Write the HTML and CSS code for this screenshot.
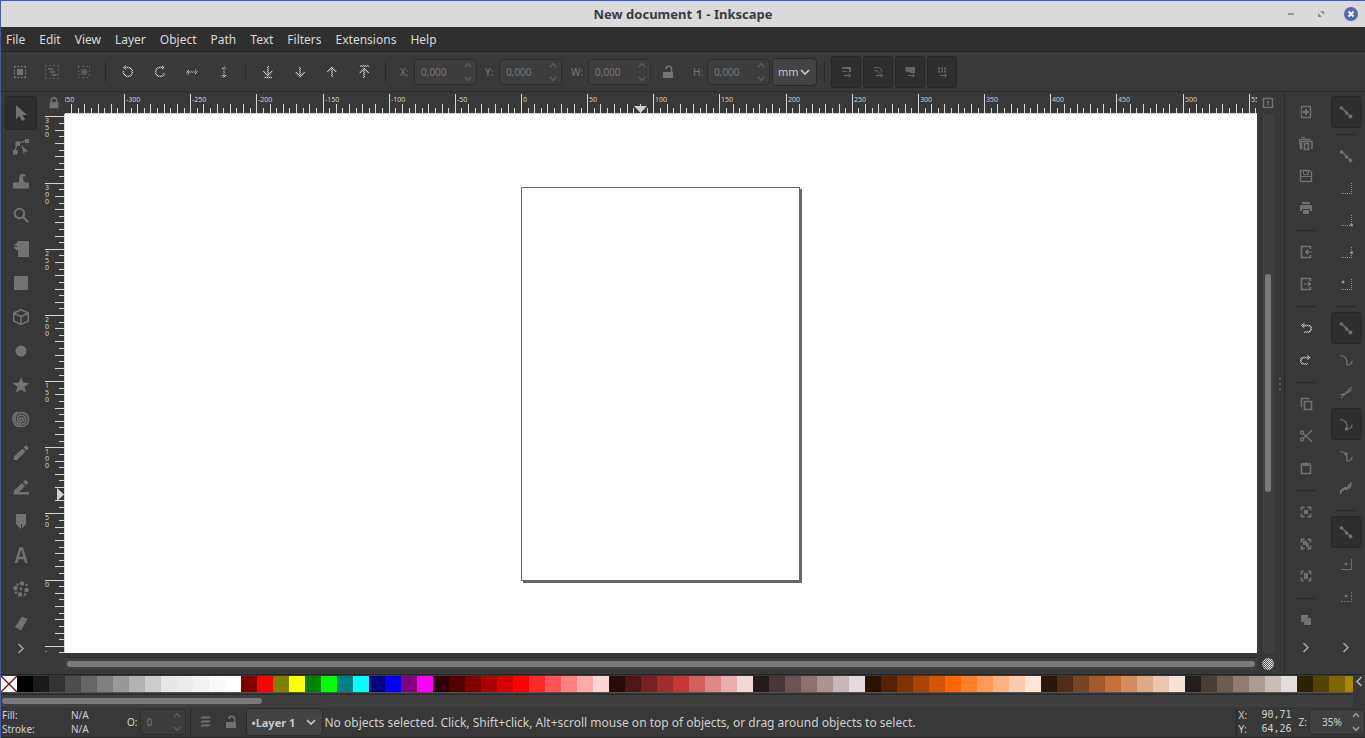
FILE: index.html
```
<!DOCTYPE html>
<html lang="en">
<head>
<meta charset="utf-8">
<title>New document 1 - Inkscape</title>
<link rel="stylesheet" href="styles.css">
</head>
<body>
<svg class="defs" width="0" height="0" aria-hidden="true">
  <defs>
    <pattern id="chk" width="2" height="2" patternUnits="userSpaceOnUse"><path d="M0 0h2v2H0z" fill="#606060"/><path d="M0 0h1v1H0zM1 1h1v1H1z" fill="#d0d0d0"/></pattern>
    <symbol id="i-selall" viewBox="0 0 16 16"><path d="M5 5h6v6H5z" fill="currentColor"/><path d="M2 2.500h12M2 13.500h12M2.500 2v12M13.500 2v12" stroke="currentColor" stroke-dasharray="2 1.300"/></symbol>
    <symbol id="i-sellayers" viewBox="0 0 16 16"><path d="M4 4h5v2H4zM6 7h5v2H6zM8 10h5v2H8z" fill="currentColor"/><path d="M1 1.500h14M1 14.500h14M1.500 1v14M14.500 1v14" stroke="currentColor" stroke-dasharray="2 2"/></symbol>
    <symbol id="i-desel" viewBox="0 0 16 16"><path d="M5 5h1v1H5zM7 5h2v1H7zM10 5h1v1h-1zM6 6h4v4H6zM5 7h1v2H5zM10 7h1v2h-1zM5 10h1v1H5zM7 10h2v1H7zM10 10h1v1h-1z" fill="currentColor"/><path d="M2 2.500h12M2 13.500h12M2.500 2v12M13.500 2v12" stroke="currentColor" stroke-dasharray="2 2"/></symbol>
    <symbol id="i-ccw" viewBox="0 0 16 16"><path d="M3.500 7a4.500 4.500 0 1 0 4-3.500H4" stroke="url(#chk)" stroke-width="1.600"/><path d="M6 1 3 3.500 6 6z" fill="url(#chk)"/></symbol>
    <symbol id="i-cw" viewBox="0 0 16 16"><path d="M12.500 9A4.500 4.500 0 1 1 9 3.500h3" stroke="url(#chk)" stroke-width="1.600"/><path d="M10 1l3 2.500L10 6z" fill="url(#chk)"/></symbol>
    <symbol id="i-fliph" viewBox="0 0 16 16"><path d="M3 7.500h10v1H3zM5 5v6L2 8zM11 5v6l3-3z" fill="url(#chk)"/></symbol>
    <symbol id="i-flipv" viewBox="0 0 16 16"><path d="M7.500 3h1v10h-1zM5 5h6L8 2zM5 11h6l-3 3z" fill="url(#chk)"/></symbol>
    <symbol id="i-down" viewBox="0 0 16 16"><path d="M8 3v9M3.500 8 8 12.500 12.500 8" stroke="url(#chk)" stroke-width="1.600"/></symbol>
    <symbol id="i-up" viewBox="0 0 16 16"><path d="M8 13V4M3.500 8 8 3.500 12.500 8" stroke="url(#chk)" stroke-width="1.600"/></symbol>
    <symbol id="i-bottom" viewBox="0 0 16 16"><path d="M8 2v9M3.500 7 8 11.500 12.500 7M4 13.500h8" stroke="url(#chk)" stroke-width="1.600"/></symbol>
    <symbol id="i-top" viewBox="0 0 16 16"><path d="M8 14V5M3.500 9 8 4.500 12.500 9M4 2h9" stroke="url(#chk)" stroke-width="1.600"/></symbol>
    <symbol id="i-lock" viewBox="0 0 16 16"><path d="M3 7h10v7H3z" fill="currentColor"/><path d="M5 7V5a3 3 0 0 1 6 0v2" stroke="currentColor" stroke-width="1.600"/></symbol>
    <symbol id="i-unlock" viewBox="0 0 16 16"><path d="M3 8h10v6H3z" fill="currentColor"/><path d="M6 5a2.700 2.700 0 0 1 5.500 0v3" stroke="currentColor" stroke-width="1.600"/></symbol>
    <symbol id="i-layers" viewBox="0 0 16 16"><path d="M5 2.500h9l-2 2H3zM5 6.500h9l-2 2H3zM5 10.500h9l-2 2H3z" fill="currentColor"/></symbol>
    <symbol id="i-scstroke" viewBox="0 0 16 16"><path d="M4 4h8v4" stroke="currentColor" stroke-width="2"/><path d="M4 7.500h5M6 11.500h6M10.500 9.500l2 2-2 2" stroke="currentColor"/></symbol>
    <symbol id="i-sccorner" viewBox="0 0 16 16"><path d="M4 3.500h3a5 5 0 0 1 5 5M4 6.500h2a3 3 0 0 1 3 3M6 11.500h6M10.500 9.500l2 2-2 2" stroke="currentColor"/></symbol>
    <symbol id="i-scgrad" viewBox="0 0 16 16"><path d="M3 3h10v6H8V8H4z" fill="currentColor"/><path d="M6 11.500h6M10.500 9.500l2 2-2 2" stroke="currentColor"/></symbol>
    <symbol id="i-scpat" viewBox="0 0 16 16"><path d="M4 4.500h9M4 7.500h9" stroke="currentColor" stroke-width="2" stroke-dasharray="2 1"/><path d="M6 11.500h6M10.500 9.500l2 2-2 2" stroke="currentColor"/></symbol>
    <symbol id="t-select" viewBox="0 0 16 16"><path d="M3 0v14l3.500-3 2.500 5 3-1.500L9.500 10H14z" fill="currentColor"/></symbol>
    <symbol id="t-node" viewBox="0 0 16 16"><path d="M0 11h4.500v4.500H0zM2.500 2.500H7V7H2.500zM12 0h4.500v4H12z" fill="currentColor"/><path d="M2 12 4 5l9-3.500" stroke="currentColor" stroke-width="1.200"/><path d="m8 6 7.500 6.500-4 .2-.5 3z" fill="currentColor"/></symbol>
    <symbol id="t-tweak" viewBox="0 0 16 16"><path d="M0 9.500h5C7 8 5.500 5 6.500 3c1.500-3.500 6-3 6.500 1-2-1.500-3.500-.5-3 1.500.2 2 1.500 3.500 3 4h3v6H0z" fill="currentColor"/></symbol>
    <symbol id="t-zoom" viewBox="0 0 16 16"><circle cx="6.500" cy="6.500" r="4.700" stroke="currentColor" stroke-width="2"/><path d="m10 10 5 5" stroke="currentColor" stroke-width="2.400"/></symbol>
    <symbol id="t-measure" viewBox="0 0 16 16"><path d="M5 0h11v16H5v-6L1 7V6h3V5H1z" fill="currentColor"/></symbol>
    <symbol id="t-rect" viewBox="0 0 16 16"><path d="M1 1h14v14H1z" fill="currentColor"/></symbol>
    <symbol id="t-box" viewBox="0 0 16 16"><path d="M8 .8 15.300 4v8L8 15.500.7 12V4zM.7 4 8 7.500 15.300 4M8 7.500v8" stroke="currentColor" stroke-width="1.600"/></symbol>
    <symbol id="t-circle" viewBox="0 0 16 16"><circle cx="8" cy="8" r="5.500" fill="currentColor"/></symbol>
    <symbol id="t-star" viewBox="0 0 16 16"><path d="m8 0 2.200 5.600 6 .4-4.600 3.800 1.500 5.900L8 12.500l-5.100 3.200 1.500-5.900L-.2 6l6-.4z" fill="currentColor"/></symbol>
    <symbol id="t-spiral" viewBox="0 0 18 18"><path d="M9 9.500c-1.500 0-1.500-2 0-2 2.500 0 3 4 0 4.200-4.500.3-4.500-6.500 0-6.700 6-.2 6.500 9 0 9.200-8 .3-8-11.600 0-11.700 10-.2 10 14 0 14C1 16.500 0 9 2 4.500L5 2" stroke="currentColor" stroke-width="1.700"/></symbol>
    <symbol id="t-pencil" viewBox="0 0 16 16"><path d="m.5 15 .5-3.500L9.500 3.500 12.500 6.500 4 15zM10.500 2.500 13 0l3 3-2.500 2.500z" fill="currentColor"/></symbol>
    <symbol id="t-pen" viewBox="0 0 16 16"><path d="m.5 15.500.5-4L9 4l3 3-6 6h10v2.500zM10 3l2.500-2.500 3 3L13 6z" fill="currentColor"/></symbol>
    <symbol id="t-callig" viewBox="0 0 16 16"><path d="M3 1h10v10l-4 4.500V11H8v4.500H7L3 11z" fill="currentColor"/></symbol>
    <symbol id="t-text" viewBox="0 0 16 16"><path d="M3 16 7.300 1.500h1.800l4.300 14.500M4.500 11h7.500" stroke="currentColor" stroke-width="2.600"/></symbol>
    <symbol id="t-spray" viewBox="0 0 16 16"><g fill="currentColor"><circle cx="9" cy="2.500" r="2.200"/><circle cx="2.500" cy="7" r="2.200"/><circle cx="13.500" cy="9" r="2.300"/><circle cx="7" cy="13.500" r="2.200"/><circle cx="8" cy="8" r="1.400"/><circle cx="4.500" cy="3.500" r="1.200"/><circle cx="13.500" cy="4" r="1.200"/><circle cx="3" cy="11.500" r="1.300"/><circle cx="12" cy="13.500" r="1.300"/></g></symbol>
    <symbol id="t-eraser" viewBox="0 0 16 16"><path d="M9 1.500 14.500 4 8 15.500 2 12z" fill="currentColor"/></symbol>
    <symbol id="c-right" viewBox="0 0 16 16"><path d="m5.500 4 4.500 4.500-4.500 4.500" stroke="currentColor" stroke-width="1.700"/></symbol>
    <symbol id="c-left" viewBox="0 0 16 16"><path d="M10.500 4 6 8.500l4.500 4.500" stroke="currentColor" stroke-width="1.700"/></symbol>
    <symbol id="c-down" viewBox="0 0 10 10"><path d="m1 3 4 4 4-4" stroke="currentColor" stroke-width="1.700"/></symbol>
    <symbol id="c-spin" viewBox="0 0 8 24"><path d="m1 7 3-3.500L7 7M1 17l3 3.500L7 17" stroke="currentColor" stroke-width="1.400"/></symbol>
    <symbol id="d-new" viewBox="0 0 16 16"><path d="M3.500 2.500h9v11h-9z" stroke="currentColor" stroke-width="1.400"/><path d="M8 5v6M5 8h6" stroke="currentColor" stroke-width="2"/></symbol>
    <symbol id="d-open" viewBox="0 0 16 16"><path d="M4.500 12.500H2.500L1.500 3.500h11" stroke="currentColor" stroke-width="1.500"/><path d="M3 1.500h4" stroke="currentColor"/><path d="M3.500 12V5.500H14V12h-1.500" stroke="currentColor" stroke-width="1.500"/><path d="M6.500 7.500h4v6h-4z" stroke="currentColor" stroke-width="1.600"/></symbol>
    <symbol id="d-save" viewBox="0 0 16 16"><path d="M2.500 2.500h9l2 2v9h-11z" stroke="currentColor" stroke-width="1.400"/><path d="M3 8.500h10M5.500 3v3.500h5V3M9 3v2" stroke="currentColor"/></symbol>
    <symbol id="d-print" viewBox="0 0 16 16"><path d="M4 2h8v2H4zM2 5h12v6h-2V9H4v2H2zM5 10h6v4H5z" fill="currentColor"/></symbol>
    <symbol id="d-import" viewBox="0 0 16 16"><path d="M12.500 5V2.500h-9v11h9V11" stroke="currentColor" stroke-width="1.700"/><path d="M14 8H8M10 5.500 7 8l3 2.500z" stroke="currentColor" fill="currentColor"/></symbol>
    <symbol id="d-export" viewBox="0 0 16 16"><path d="M12.500 5V2.500h-9v11h9V11" stroke="currentColor" stroke-width="1.700"/><path d="M6 8h5M10.500 6l2.500 2-2.500 2z" stroke="currentColor" fill="currentColor"/></symbol>
    <symbol id="d-undo" viewBox="0 0 16 16"><path d="M4 5.500h6a3.200 3.200 0 0 1 0 6.500H6" stroke="url(#chk)" stroke-width="1.600"/><path d="M6.500 2.500v6L3 5.500z" fill="url(#chk)"/></symbol>
    <symbol id="d-redo" viewBox="0 0 16 16"><path d="M12 5.500H6A3.200 3.200 0 0 0 6 12h4" stroke="url(#chk)" stroke-width="1.600"/><path d="M9.500 2.500v6l3.500-3z" fill="url(#chk)"/></symbol>
    <symbol id="d-copy" viewBox="0 0 16 16"><path d="M4 10.500H3.500v-8h7v1" stroke="currentColor" stroke-width="1.500"/><path d="M6.500 5.500h7v8h-7z" stroke="currentColor" stroke-width="1.700"/></symbol>
    <symbol id="d-cut" viewBox="0 0 16 16"><path d="m5 5.500 9 8M5 10.500l9-8" stroke="currentColor" stroke-width="1.600"/><circle cx="4" cy="4.500" r="1.500" stroke="currentColor" stroke-width="1.300"/><circle cx="4" cy="11.500" r="1.500" stroke="currentColor" stroke-width="1.300"/></symbol>
    <symbol id="d-paste" viewBox="0 0 16 16"><path d="M3.500 4h9v9.500h-9z" stroke="currentColor" stroke-width="1.600"/><path d="M5 3h2l1-1.500L9 3h2v3H5z" fill="currentColor"/></symbol>
    <symbol id="d-zsel" viewBox="0 0 16 16"><path d="M3.500 6.500v-3h3M9.500 3.500h3v3M12.500 9.500v3h-3M6.500 12.500h-3v-3" stroke="currentColor" stroke-width="1.800"/><path d="M6 6h4v4H6z" fill="currentColor"/></symbol>
    <symbol id="d-zdraw" viewBox="0 0 16 16"><path d="M3.500 6.500v-3h3M9.500 3.500h3v3M12.500 9.500v3h-3M6.500 12.500h-3v-3" stroke="currentColor" stroke-width="1.800"/><path d="M5 5h4v2h2v4H8V9H5z" fill="currentColor"/></symbol>
    <symbol id="d-zpage" viewBox="0 0 16 16"><path d="M3.500 6.500v-3h2M10.500 3.500h2v3M12.500 9.500v3h-2M5.500 12.500h-2v-3" stroke="currentColor" stroke-width="1.800"/><path d="M6 5h4v6H6z" fill="currentColor"/></symbol>
    <symbol id="d-dup" viewBox="0 0 16 16"><path d="M3 3h7v3h3v7H6v-3H3z" fill="currentColor"/></symbol>
    <symbol id="s-snap" viewBox="0 0 16 16"><path d="m4 4 8.500 8.500" stroke="currentColor" stroke-width="1.300"/><circle cx="3.500" cy="4" r="1.800" fill="currentColor"/><circle cx="8.500" cy="9" r="1.700" fill="currentColor"/><circle cx="12.500" cy="12.500" r="1.900" fill="currentColor"/></symbol>
    <symbol id="s-corner" viewBox="0 0 16 16"><path d="M3 13.500h11M13.500 3v10" stroke="#909090" stroke-dasharray="1 1"/></symbol>
    <symbol id="s-corner2" viewBox="0 0 16 16"><path d="M3 13.500h11M13.500 3v10" stroke="#909090" stroke-dasharray="1 1"/><circle cx="13.500" cy="13" r="1.500" fill="#909090"/></symbol>
    <symbol id="s-edgemid" viewBox="0 0 16 16"><path d="M3 13.500h11M13.500 3v10" stroke="#909090" stroke-dasharray="1 1"/><circle cx="13.500" cy="8.500" r="1.500" fill="#909090"/></symbol>
    <symbol id="s-center" viewBox="0 0 16 16"><path d="M3 13.500h11M13.500 3v10" stroke="#909090" stroke-dasharray="1 1"/><circle cx="5" cy="6" r="1.500" fill="#909090"/></symbol>
    <symbol id="s-path" viewBox="0 0 16 16"><path d="M2 3.500c5 0 8 4 7 9.500 3 0 5-1.500 5-4.500" stroke="currentColor" stroke-width="1.200"/></symbol>
    <symbol id="s-inter" viewBox="0 0 16 16"><path d="M2 10.500c5 0 8-2.500 12-4.500M3 14 13.500 3" stroke="currentColor" stroke-width="1.200"/></symbol>
    <symbol id="s-cusp" viewBox="0 0 16 16"><path d="M2 3.500c5 0 8 4 7 9.500 3 0 5-1.500 5-4.500" stroke="currentColor" stroke-width="1.200"/><circle cx="8.500" cy="13" r="1.800" fill="currentColor"/></symbol>
    <symbol id="s-smooth" viewBox="0 0 16 16"><path d="M2 3.500c5 0 8 4 7 9.500 3 0 5-1.500 5-4.500" stroke="currentColor" stroke-width="1.200"/><circle cx="8" cy="6" r="1.800" fill="currentColor"/></symbol>
    <symbol id="s-mid" viewBox="0 0 16 16"><path d="M2 12c3-5 8-3 12-7M2.500 14l2-6M11.500 9l1.500-7M5 11l2-4M9 10l2-6" stroke="currentColor" stroke-width="1.400"/><circle cx="8" cy="8.500" r="1.700" fill="currentColor"/></symbol>
    <symbol id="s-obj" viewBox="0 0 16 16"><path d="M3 13.500h10.500V3" stroke="currentColor"/><circle cx="8" cy="8" r="1.500" fill="currentColor"/></symbol>
    <symbol id="s-rot" viewBox="0 0 16 16"><path d="M3 13.500h10.500V3" stroke="currentColor" stroke-dasharray="2 1"/><circle cx="8" cy="8" r="1.500" fill="currentColor"/></symbol>
  </defs>
</svg>

<div class="app">
  <header class="titlebar">
    <h1 class="title">New document 1 - Inkscape</h1>
    <div class="winbtns">
      <button class="winbtn" aria-label="Minimize"><svg width="16" height="16" viewBox="0 0 16 16"><path d="M5 8h6" stroke="#999" stroke-width="2"/></svg></button>
      <button class="winbtn" aria-label="Maximize"><svg width="16" height="16" viewBox="0 0 16 16"><path d="M7 5h4v4zM5 7l4 4H5z" fill="#8e8e8e"/></svg></button>
      <button class="winbtn" aria-label="Close"><svg width="16" height="16" viewBox="0 0 16 16"><circle cx="8" cy="8" r="7" fill="#5468b8"/><path d="m5.500 5.500 5 5M10.500 5.500l-5 5" stroke="#fff" stroke-width="2"/></svg></button>
    </div>
  </header>

  <nav class="menubar">
    <button>File</button><button>Edit</button><button>View</button><button>Layer</button><button>Object</button><button>Path</button><button>Text</button><button>Filters</button><button>Extensions</button><button>Help</button>
  </nav>

  <div class="toolbar">
    <button class="tb mid" aria-label="Select all"><svg><use href="#i-selall"/></svg></button>
    <button class="tb dim" aria-label="Select all in all layers"><svg><use href="#i-sellayers"/></svg></button>
    <button class="tb dim" aria-label="Deselect"><svg><use href="#i-desel"/></svg></button>
    <span class="vsep"></span>
    <button class="tb" aria-label="Rotate left"><svg><use href="#i-ccw"/></svg></button>
    <button class="tb" aria-label="Rotate right"><svg><use href="#i-cw"/></svg></button>
    <button class="tb" aria-label="Flip horizontal"><svg><use href="#i-fliph"/></svg></button>
    <button class="tb" aria-label="Flip vertical"><svg><use href="#i-flipv"/></svg></button>
    <span class="vsep"></span>
    <button class="tb" aria-label="Lower to bottom"><svg><use href="#i-bottom"/></svg></button>
    <button class="tb" aria-label="Lower"><svg><use href="#i-down"/></svg></button>
    <button class="tb" aria-label="Raise"><svg><use href="#i-up"/></svg></button>
    <button class="tb" aria-label="Raise to top"><svg><use href="#i-top"/></svg></button>
    <span class="vsep"></span>
    <div class="field"><label for="fx">X:</label><span class="spin"><input id="fx" value="0,000" disabled><svg><use href="#c-spin"/></svg></span></div>
    <div class="field"><label for="fy">Y:</label><span class="spin"><input id="fy" value="0,000" disabled><svg><use href="#c-spin"/></svg></span></div>
    <div class="field wide"><label for="fw">W:</label><span class="spin"><input id="fw" value="0,000" disabled><svg><use href="#c-spin"/></svg></span></div>
    <button class="tb mid lockbtn" aria-label="Lock ratio"><svg><use href="#i-unlock"/></svg></button>
    <div class="field"><label for="fh">H:</label><span class="spin"><input id="fh" value="0,000" disabled><svg><use href="#c-spin"/></svg></span></div>
    <span class="drop unit"><select aria-label="Unit"><option>mm</option></select><svg><use href="#c-down"/></svg></span>
    <span class="vsep"></span>
    <button class="tb on" aria-label="Scale stroke width"><svg><use href="#i-scstroke"/></svg></button>
    <button class="tb on" aria-label="Scale corners"><svg><use href="#i-sccorner"/></svg></button>
    <button class="tb on" aria-label="Move gradients"><svg><use href="#i-scgrad"/></svg></button>
    <button class="tb on" aria-label="Move patterns"><svg><use href="#i-scpat"/></svg></button>
  </div>

  <main class="main">
    <div class="toolbox">
      <button class="tool on" aria-label="Selector"><svg><use href="#t-select"/></svg></button>
      <button class="tool" aria-label="Node"><svg><use href="#t-node"/></svg></button>
      <button class="tool" aria-label="Tweak"><svg><use href="#t-tweak"/></svg></button>
      <button class="tool" aria-label="Zoom"><svg><use href="#t-zoom"/></svg></button>
      <button class="tool" aria-label="Measure"><svg><use href="#t-measure"/></svg></button>
      <button class="tool" aria-label="Rectangle"><svg><use href="#t-rect"/></svg></button>
      <button class="tool" aria-label="3D box"><svg><use href="#t-box"/></svg></button>
      <button class="tool" aria-label="Ellipse"><svg><use href="#t-circle"/></svg></button>
      <button class="tool" aria-label="Star"><svg><use href="#t-star"/></svg></button>
      <button class="tool spiral" aria-label="Spiral"><svg><use href="#t-spiral"/></svg></button>
      <button class="tool" aria-label="Pencil"><svg><use href="#t-pencil"/></svg></button>
      <button class="tool" aria-label="Pen"><svg><use href="#t-pen"/></svg></button>
      <button class="tool" aria-label="Calligraphy"><svg><use href="#t-callig"/></svg></button>
      <button class="tool" aria-label="Text"><svg><use href="#t-text"/></svg></button>
      <button class="tool" aria-label="Spray"><svg><use href="#t-spray"/></svg></button>
      <button class="tool" aria-label="Eraser"><svg><use href="#t-eraser"/></svg></button>
      <button class="more" aria-label="More tools"><svg><use href="#c-right"/></svg></button>
    </div>

    <div class="desk">
      <button class="guidelock" aria-label="Lock guides"><svg><use href="#i-lock"/></svg></button>
      <svg class="hruler" id="hruler"></svg>
      <button class="pagebtn" aria-label="Fit page"><svg width="12" height="12" viewBox="0 0 12 12"><path d="M1.500 1.500h9v9h-9z" stroke="#707070" stroke-width="1.400"/><path d="M6 4v4M5 4.500h1" stroke="#888"/></svg></button>
      <svg class="vruler" id="vruler"></svg>
      <div class="canvas" id="canvas"><div class="page"></div></div>
      <div class="vscroll"><div class="vtrough"><div class="vthumb"></div></div><div class="grip"><i></i><i></i><i></i></div></div>
      <div class="hscroll"><div class="hthumb"></div></div>
      <button class="cms" aria-label="Color management"><svg width="12" height="12" viewBox="0 0 12 12"><defs><pattern id="dots" width="2" height="2" patternUnits="userSpaceOnUse"><path d="M0 0h1v1H0zM1 1h1v1H1z" fill="#e0e0e0"/></pattern></defs><path d="M6 6V0a6 6 0 0 1 6 6z" fill="#466"/><path d="M6 6h6a6 6 0 0 1-6 6z" fill="#6a6420"/><path d="M6 6v6a6 6 0 0 1-6-6z" fill="#80283c"/><path d="M6 6H0a6 6 0 0 1 6-6z" fill="#533b60"/><circle cx="6" cy="6" r="6" fill="url(#dots)"/></svg></button>
    </div>

    <div class="commands">
      <button class="cmd" aria-label="New"><svg><use href="#d-new"/></svg></button>
      <button class="cmd" aria-label="Open"><svg><use href="#d-open"/></svg></button>
      <button class="cmd" aria-label="Save"><svg><use href="#d-save"/></svg></button>
      <button class="cmd" aria-label="Print"><svg><use href="#d-print"/></svg></button>
      <span class="hsep"></span>
      <button class="cmd" aria-label="Import"><svg><use href="#d-import"/></svg></button>
      <button class="cmd" aria-label="Export"><svg><use href="#d-export"/></svg></button>
      <span class="hsep"></span>
      <button class="cmd" aria-label="Undo"><svg><use href="#d-undo"/></svg></button>
      <button class="cmd" aria-label="Redo"><svg><use href="#d-redo"/></svg></button>
      <span class="hsep"></span>
      <button class="cmd" aria-label="Copy"><svg><use href="#d-copy"/></svg></button>
      <button class="cmd" aria-label="Cut"><svg><use href="#d-cut"/></svg></button>
      <button class="cmd" aria-label="Paste"><svg><use href="#d-paste"/></svg></button>
      <span class="hsep"></span>
      <button class="cmd" aria-label="Zoom selection"><svg><use href="#d-zsel"/></svg></button>
      <button class="cmd" aria-label="Zoom drawing"><svg><use href="#d-zdraw"/></svg></button>
      <button class="cmd" aria-label="Zoom page"><svg><use href="#d-zpage"/></svg></button>
      <span class="hsep"></span>
      <button class="cmd" aria-label="Duplicate"><svg><use href="#d-dup"/></svg></button>
      <button class="more" aria-label="More commands"><svg><use href="#c-right"/></svg></button>
    </div>

    <div class="snapbar">
      <button class="cmd on" aria-label="Enable snapping"><svg><use href="#s-snap"/></svg></button>
      <span class="hsep"></span>
      <button class="cmd" aria-label="Snap bounding boxes"><svg><use href="#s-snap"/></svg></button>
      <button class="cmd" aria-label="Snap edges"><svg><use href="#s-corner"/></svg></button>
      <button class="cmd" aria-label="Snap corners"><svg><use href="#s-corner2"/></svg></button>
      <button class="cmd" aria-label="Snap edge midpoints"><svg><use href="#s-edgemid"/></svg></button>
      <button class="cmd" aria-label="Snap box centers"><svg><use href="#s-center"/></svg></button>
      <span class="hsep"></span>
      <button class="cmd on" aria-label="Snap nodes"><svg><use href="#s-snap"/></svg></button>
      <button class="cmd" aria-label="Snap paths"><svg><use href="#s-path"/></svg></button>
      <button class="cmd" aria-label="Snap intersections"><svg><use href="#s-inter"/></svg></button>
      <button class="cmd on" aria-label="Snap cusp nodes"><svg><use href="#s-cusp"/></svg></button>
      <button class="cmd" aria-label="Snap smooth nodes"><svg><use href="#s-smooth"/></svg></button>
      <button class="cmd" aria-label="Snap midpoints"><svg><use href="#s-mid"/></svg></button>
      <span class="hsep"></span>
      <button class="cmd on" aria-label="Snap other points"><svg><use href="#s-snap"/></svg></button>
      <button class="cmd" aria-label="Snap object centers"><svg><use href="#s-obj"/></svg></button>
      <button class="cmd" aria-label="Snap rotation centers"><svg><use href="#s-rot"/></svg></button>
      <button class="more" aria-label="More snapping"><svg><use href="#c-right"/></svg></button>
    </div>
  </main>

  <div class="palette">
    <div class="palmain">
      <div class="swatches" id="swatches"></div>
      <div class="palscroll"><div class="palthumb"></div></div>
    </div>
    <button class="palmenu" aria-label="Palettes"><svg><use href="#c-left"/></svg></button>
  </div>

  <footer class="status">
    <dl class="style"><dt>Fill:</dt><dd>N/A</dd><dt>Stroke:</dt><dd>N/A</dd></dl>
    <div class="opacity"><label for="op">O:</label><span class="spin small"><input id="op" value="0" disabled><svg><use href="#c-spin"/></svg></span></div>
    <span class="bar"></span>
    <button class="sb" aria-label="Layer visibility"><svg><use href="#i-layers"/></svg></button>
    <button class="sb" aria-label="Layer lock"><svg><use href="#i-unlock"/></svg></button>
    <span class="drop layer"><select aria-label="Layer"><option>•Layer 1</option></select><svg><use href="#c-down"/></svg></span>
    <p class="message">No objects selected. Click, Shift+click, Alt+scroll mouse on top of objects, or drag around objects to select.</p>
    <span class="bar"></span>
    <dl class="coords"><dt>X:</dt><dd>90,71</dd><dt>Y:</dt><dd>64,26</dd></dl>
    <label class="zlabel" for="zoom">Z:</label>
    <span class="spin zoom"><input id="zoom" value="35%"><svg><use href="#c-spin"/></svg></span>
  </footer>
</div>
<script src="app.js"></script>
</body>
</html>
```

FILE: styles.css
```
* { box-sizing: border-box; }
body { margin: 0; font-family: "Noto Sans", sans-serif; color: #d0d0d0; background: #383838; overflow: hidden; }
svg { display: block; fill: none; }
.defs { position: absolute; }
button { margin: 0; padding: 0; border: 0; background: none; font: inherit; color: inherit; }
button svg { width: 16px; height: 16px; }
h1, p, dl, dd { margin: 0; }

.app { display: flex; flex-direction: column; height: 100vh; border: 1px solid #4759a0; border-width: 1px 0 0 1px; }

.titlebar { display: grid; grid-template-columns: 1fr auto 1fr; align-items: center; height: 26px; background: #dadada; }
.title { grid-column: 2; font-size: 13px; line-height: 26px; color: #3c3c3c; }
.winbtns { display: flex; justify-content: flex-end; gap: 14px; padding-right: 6px; }

.menubar { display: flex; gap: 14px; height: 25px; padding-left: 5px; background: #2f2f2f; border-bottom: 1px solid #252525; font-size: 12px; line-height: 26px; color: #dadada; }

.toolbar { display: flex; align-items: center; height: 40px; padding-left: 3px; background: #393939; border-bottom: 1px solid #2b2b2b; font-size: 10px; color: #757575; }
.tb { display: grid; place-items: center; width: 32px; height: 32px; flex: none; }
.mid { color: #747474; }
.dim { color: #5c5c5c; }
.vsep { width: 1px; height: 20px; margin: 0 6px 0 5px; background: #292929; flex: none; }
.on { background: #2e2e2e; border: 1px solid #262626; border-radius: 3px; background-clip: padding-box; }
.tb.on { width: 30px; margin-right: 2px; color: #666; }
.field { display: flex; align-items: center; justify-content: space-between; width: 77px; margin-left: 8px; flex: none; }
.field.wide { width: 80px; margin-left: 9px; }
.spin { position: relative; display: flex; width: 63px; height: 26px; border: 1px solid #2d2d2d; border-radius: 4px; background: #3d3d3d; color: #5c5c5c; }
.spin input { width: 100%; min-width: 0; padding: 0 0 0 6px; border: 0; background: none; font: inherit; color: #757575; outline: 0; }
.spin svg { position: absolute; right: 4px; top: 0; width: 8px; height: 24px; }
.lockbtn { width: 24px; margin: 0 5px; }
.drop { position: relative; flex: none; border: 1px solid #2a2a2a; border-radius: 4px; background: #434343; color: #c8c8c8; }
.drop select { width: 100%; height: 100%; padding: 0 0 0 5px; border: 0; background: none; appearance: none; font: inherit; color: inherit; }
.drop svg { position: absolute; right: 6px; top: 8px; width: 10px; height: 10px; pointer-events: none; }
.unit { width: 45px; height: 28px; margin: 0 2px; font-size: 11px; }

.main { display: grid; grid-template-columns: 44px 1fr 43px 38px; flex: 1; min-height: 0; }
.toolbox { display: flex; flex-direction: column; padding: 4px 0 0 4px; color: #727272; }
.tool { display: grid; place-items: center; width: 32px; height: 34px; flex: none; }
.spiral svg { width: 18px; height: 18px; }
.more { display: grid; place-items: center; width: 32px; height: 16px; color: #a0a0a0; flex: none; }

.desk { display: grid; grid-template-columns: 20px 1fr 27px; grid-template-rows: 22px 1fr 21px; min-width: 0; min-height: 0; }
.guidelock { display: grid; place-items: center; padding-right: 2px; color: #747474; }
.guidelock svg { width: 14px; height: 14px; }
.hruler { width: 100%; height: 22px; }
.vruler { width: 20px; height: 100%; }
.hruler, .vruler { min-height: 0; overflow: hidden; font-size: 7px; }
.ticks { stroke: #d8d8d8; }
.num, .mark { fill: #d0d0d0; }
.pagebtn { display: grid; place-items: center start; padding-left: 5px; }
.pagebtn svg, .cms svg { width: 12px; height: 12px; }
.canvas { position: relative; overflow: hidden; background: #fff; }
.page { position: absolute; left: 456px; top: 73px; width: 279px; height: 394px; border: 1px solid #666; background: #fff; box-shadow: 2px 2px 0 #666; }
.vscroll { display: flex; padding-left: 4px; }
.vtrough { width: 13px; border-left: 1px solid #2d2d2d; background: #3f3f3f; padding: 160px 3px; }
.vthumb { width: 6px; height: 218px; border-radius: 3px; background: #7a7a7a; }
.grip { display: flex; flex-direction: column; justify-content: center; gap: 3px; margin-left: 5px; }
.grip i { width: 2px; height: 2px; background: #5c5c5c; }
.hscroll { grid-column: 2; align-self: start; margin-top: 4px; padding: 3px 2px; border-top: 1px solid #2a2a2a; background: #3f3f3f; }
.hthumb { height: 6px; border-radius: 3px; background: #7a7a7a; }
.cms { display: grid; place-items: center start; padding-left: 5px; }

.commands, .snapbar { display: flex; flex-direction: column; align-items: center; padding-top: 4px; color: #707070; min-height: 0; }
.commands { border-left: 1px solid #282828; }
.cmd { display: grid; place-items: center; width: 30px; height: 32px; flex: none; }
.commands .more { margin-top: 3px; }
.snapbar .more { margin-top: 27px; }
.hsep { width: 20px; height: 12px; flex: none; background: linear-gradient(#282828, #282828) 0 6px / 100% 1px no-repeat; }

.palette { display: grid; grid-template-columns: 1fr 12px; border-top: 1px solid #262626; padding-top: 1px; }
.palmain { min-width: 0; }
.swatches { display: flex; height: 17px; overflow: hidden; border-bottom: 1px solid #505050; }
.swatches button { width: 16px; height: 16px; flex: none; }
.palscroll { height: 13px; margin-top: 1px; padding: 3px 1px; border-top: 1px solid #2a2a2a; background: #3f3f3f; }
.palthumb { width: 260px; height: 6px; border-radius: 3px; background: #7a7a7a; }
.palmenu { align-self: start; justify-self: center; width: 10px; overflow: hidden; color: #b0b0b0; }
.palmenu svg { margin-left: -3px; margin-top: -3px; }

.status { display: flex; align-items: center; height: 31px; border-bottom: 1px solid #222; font-size: 10px; flex: none; }
.style, .coords { display: grid; line-height: 14px; flex: none; }
.style { grid-template-columns: 69px 56px; padding-left: 1px; }
.opacity { display: flex; align-items: center; gap: 2px; flex: none; }
.spin.small { width: 46px; }
.bar { width: 1px; height: 28px; background: #282828; flex: none; margin-left: 4px; }
.sb { display: grid; place-items: center; width: 26px; height: 26px; color: #707070; flex: none; }
.bar + .sb { margin-left: 1px; }
.layer { width: 77px; height: 28px; margin-left: 2px; font-size: 11px; font-weight: 700; }
.message { flex: 1; min-width: 0; padding-left: 2px; font-size: 12px; white-space: nowrap; overflow: hidden; }
.coords { grid-template-columns: 19px 34px; padding-left: 2px; }
.coords dd { font-family: "DejaVu Sans Mono", monospace; text-align: right; }
.zlabel { padding: 0 2px 0 7px; }
.spin.zoom { width: 56px; color: #a0a0a0; background: #404040; flex: none; }
.spin.zoom input { padding-left: 12px; color: #d0d0d0; }
```

FILE: app.js
```
const NS = 'http://www.w3.org/2000/svg';
const SCALE = 1.3233;

function add(parent, tag, attrs, text) {
  const el = document.createElementNS(NS, tag);
  for (const key in attrs) el.setAttribute(key, attrs[key]);
  if (text !== undefined) el.textContent = text;
  parent.appendChild(el);
}

function drawRulers() {
  const h = document.getElementById('hruler');
  const v = document.getElementById('vruler');
  const canvas = document.getElementById('canvas');
  const width = canvas.clientWidth;
  const height = canvas.clientHeight;
  h.replaceChildren();
  v.replaceChildren();

  let path = `M0 21.5H${width}`;
  for (let mm = -350; 456 + mm * SCALE < width; mm += 5) {
    const x = Math.round(456 + mm * SCALE) + 0.5;
    path += `M${x} ${mm % 50 === 0 ? 2 : mm % 10 === 0 ? 12 : 16}V21`;
    if (mm % 50 === 0) add(h, 'text', { x: x + 1.5, y: 10, class: 'num' }, mm);
  }
  add(h, 'path', { d: path, class: 'ticks' });
  add(h, 'path', { d: 'M569 14h13l-6.500 7z', class: 'mark' });

  path = `M19.5 0V${height}`;
  for (let mm = 350; 466 - mm * SCALE < height; mm -= 5) {
    const y = Math.round(465.65 - mm * SCALE) + 0.5;
    path += `M${mm % 50 === 0 ? 0 : mm % 10 === 0 ? 10 : 14} ${y}H19`;
    if (mm % 50 === 0) {
      [...String(mm)].forEach((c, i) => {
        const base = y + 6.5 + i * 7;
        if (base < height + 2) add(v, 'text', { x: 0, y: base, class: 'num' }, c);
      });
    }
  }
  add(v, 'path', { d: path, class: 'ticks' });
  add(v, 'path', { d: 'M12 374v13l7-6.500z', class: 'mark' });
}

const COLORS = ('000000 1a1a1a 333333 4d4d4d 666666 808080 999999 b3b3b3 cccccc e6e6e6 ececec f2f2f2 f9f9f9 ffffff ' +
  '800000 ff0000 808000 ffff00 008000 00ff00 008080 00ffff 000080 0000ff 800080 ff00ff ' +
  '2b0000 550000 800000 aa0000 d40000 ff0000 ff2a2a ff5555 ff8080 ffaaaa ffd5d5 ' +
  '280b0b 501616 782121 a02c2c c83737 d35f5f de8787 e9afaf f4d7d7 ' +
  '241c1c 483737 6c5353 916f6f ac9393 c8b7b7 e3dbdb ' +
  '2b1100 552200 803300 aa4400 d45500 ff6600 ff7f2a ff9955 ffb380 ffccaa ffe6d5 ' +
  '28170b 502d16 784421 a05a2c c87137 d38d5f deaa87 e9c6af f4e3d7 ' +
  '241f1c 483e37 6c5d53 917c6f ac9d93 c8beb7 e3dedb 2b2200 554400 806600 aa8800').split(' ');

const swatches = document.getElementById('swatches');
swatches.innerHTML = '<button aria-label="None"><svg viewBox="0 0 16 16"><path d="M0 0h16v16H0z" fill="#fff"/><path d="m0 0 16 16M16 0 0 16" stroke="#7a1515" stroke-width="1.400"/></svg></button>' +
  COLORS.map(c => `<button aria-label="#${c}" style="background:#${c}"></button>`).join('');
drawRulers();
window.addEventListener('resize', drawRulers);
```
